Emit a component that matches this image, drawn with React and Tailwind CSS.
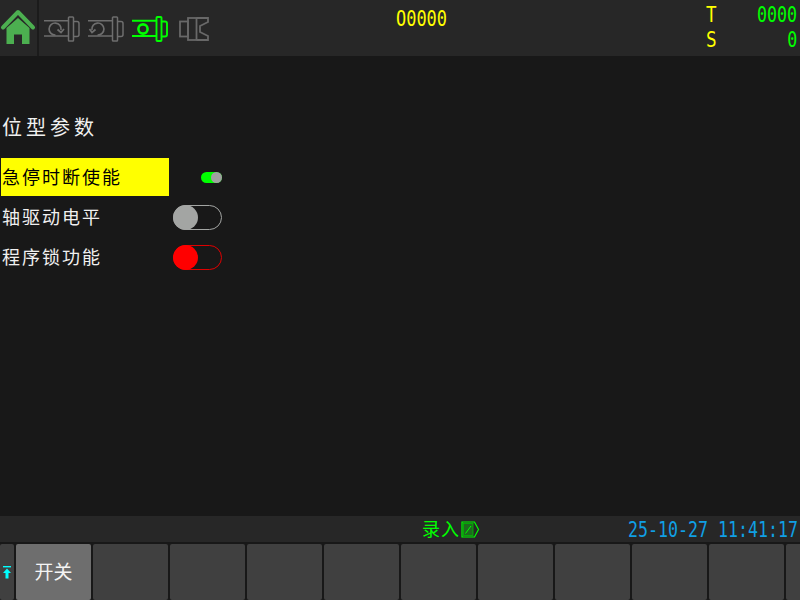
import React from "react";

const FONT = "font-['DejaVu_Sans_Mono','Noto_Sans_CJK_SC',monospace]";

function HomeIcon() {
  return (
    <svg width="36" height="36" viewBox="0 0 36 36">
      <path d="M6.5 19 V35 H14 V25.5 H22 V35 H29.5 V19 L18 9 Z" fill="#4caf50" />
      <path d="M3 18.5 L18 3 L33 18.5" fill="none" stroke="#4caf50" strokeWidth="4" strokeLinecap="round" strokeLinejoin="round" />
    </svg>
  );
}

function Spindle({ color, dir, hold }) {
  return (
    <svg width="36" height="26" viewBox="0 0 36 26" fill="none" stroke={color} strokeWidth={hold ? 1.9 : 1.5}>
      <path d="M0 4.7 H24 M0 20 H24" />
      <rect x="24.5" y="1" width="5" height="24" rx="0.8" />
      <path d="M29.5 5.5 H33 Q35 5.5 35 7.5 V18.5 Q35 20.5 33 20.5 H29.5" />
      {hold && <circle cx="11" cy="13" r="4.6" strokeWidth="2.6" />}
      {dir === "cw" && (
        <>
          <path d="M17 14 A6 6 0 1 0 11.5 19" strokeWidth="1.7" />
          <path d="M13.5 13.5 L17 16.5 L20 13" strokeWidth="1.7" />
        </>
      )}
      {dir === "ccw" && (
        <>
          <path d="M4 14 A6 6 0 1 1 9.5 19" strokeWidth="1.7" />
          <path d="M1.5 13 L4 16.5 L7.5 13.5" strokeWidth="1.7" />
        </>
      )}
    </svg>
  );
}

function ChuckIcon() {
  return (
    <svg width="30" height="24" viewBox="0 0 30 24" fill="none" stroke="#686868" strokeWidth="1.8">
      <rect x="1" y="4.5" width="8" height="15" />
      <rect x="9" y="1" width="8.5" height="22" />
      <path d="M17.5 1 H29 V5 L21 9 V15 L29 19 V23 H17.5" />
    </svg>
  );
}

function ModeIcon() {
  return (
    <svg width="19" height="17" viewBox="0 0 19 17" fill="none" className="ml-px">
      <path d="M1 1 H13.5 L17.5 8.5 L13.5 16 H1 Z" stroke="#00ff00" strokeWidth="1.2" />
      <rect x="2.5" y="2.5" width="9.5" height="12" fill="#1d6b1d" stroke="#00c000" strokeWidth="0.8" />
      <path d="M4.5 12.5 L10 5" stroke="#00ff00" strokeWidth="1" />
    </svg>
  );
}

function Toggle({ fill, border }) {
  return (
    <div className={`relative h-[25px] w-[49px] rounded-full border ${border}`}>
      <div className={`absolute -left-px -top-px h-[25px] w-[25px] rounded-full ${fill}`} />
    </div>
  );
}

function ParamRow({ label, active, children }) {
  return (
    <div className="flex h-10 items-center">
      <div
        className={`flex h-[38px] w-[168px] items-center pl-px text-[18px] tracking-[2px] ${
          active ? "bg-[#ffff00] text-black" : "text-[#f0f0f0]"
        }`}
      >
        {label}
      </div>
      <div className="ml-1 flex w-[49px] justify-end">{children}</div>
    </div>
  );
}

function SoftKey({ children, wide = true, active }) {
  return (
    <div
      className={`flex h-[56px] shrink-0 items-center justify-center rounded-[2px] pt-px text-[19px] text-[#f4f4f4] ${
        wide ? "w-[75px]" : "w-[14px]"
      } ${active ? "bg-[#6e6e6e]" : "bg-[#404040]"}`}
    >
      {children}
    </div>
  );
}

export default function App() {
  return (
    <div className={`flex h-[600px] w-[800px] flex-col overflow-hidden bg-[#181818] ${FONT}`}>
      {/* top bar */}
      <div className="flex h-[56px] items-stretch bg-[#272727]">
        <div className="flex w-[39px] shrink-0 items-center justify-center border-r-2 border-[#1b1b1b] pb-[2px] pr-px">
          <HomeIcon />
        </div>
        <div className="flex w-[181px] shrink-0 items-center gap-[8px] pl-[5px] pt-[2px]">
          <Spindle color="#6e6e6e" dir="cw" />
          <Spindle color="#6e6e6e" dir="ccw" />
          <Spindle color="#00ff00" hold />
          <div className="ml-[3px] flex">
            <ChuckIcon />
          </div>
        </div>
        <div className="ml-[176px] w-[51px] origin-left scale-x-[0.77] pt-[7px] text-[22px] leading-6 text-[#ffff00]">O0000</div>
        <div className="ml-auto flex w-[94px] flex-col pr-[3px] pt-[2px] text-[22px] leading-[25px]">
          <div className="flex justify-between">
            <span className="origin-left scale-x-[0.8] text-[#ffff00]">T</span>
            <span className="origin-right scale-x-[0.755] text-[#00ff00]">0000</span>
          </div>
          <div className="flex justify-between">
            <span className="origin-left scale-x-[0.8] text-[#ffff00]">S</span>
            <span className="origin-right scale-x-[0.755] text-[#00ff00]">0</span>
          </div>
        </div>
      </div>

      {/* parameters */}
      <div className="flex-1 pl-px">
        <div className="mt-[57px] h-[44px] pl-px text-[20px] leading-[30px] tracking-[4px] text-[#f0f0f0]">位型参数</div>
        <ParamRow label="急停时断使能" active>
          <div className="flex h-[11px] w-[21px] justify-end rounded-full bg-[#00ff00]">
            <div className="h-[11px] w-[11px] rounded-full bg-[#a0a0a0]" />
          </div>
        </ParamRow>
        <ParamRow label="轴驱动电平">
          <Toggle fill="bg-[#a3a5a3]" border="border-[#a3a5a3]" />
        </ParamRow>
        <ParamRow label="程序锁功能">
          <Toggle fill="bg-[#ff0000]" border="border-[#e00000]" />
        </ParamRow>
      </div>

      {/* status bar */}
      <div className="flex h-[26px] items-center bg-[#272727]">
        <div className="ml-[422px] flex items-center text-[18px] tracking-[1px] text-[#00ff00]">
          录入
          <ModeIcon />
        </div>
        <div className="ml-auto origin-right scale-x-[0.755] whitespace-nowrap pr-[3px] text-[22px] text-[#109fe4]">25-10-27 11:41:17</div>
      </div>

      {/* soft keys */}
      <div className="mt-[2px] flex gap-[2px]">
        <SoftKey wide={false}>
          <svg width="10" height="13" viewBox="0 0 10 13" fill="#00ffff">
            <rect x="1" y="0" width="8" height="1.4" />
            <path d="M5 2.5 L9 7 H6.5 V12.5 H3.5 V7 H1 Z" />
          </svg>
        </SoftKey>
        <SoftKey active>开关</SoftKey>
        <SoftKey />
        <SoftKey />
        <SoftKey />
        <SoftKey />
        <SoftKey />
        <SoftKey />
        <SoftKey />
        <SoftKey />
        <SoftKey />
        <SoftKey />
      </div>
    </div>
  );
}
